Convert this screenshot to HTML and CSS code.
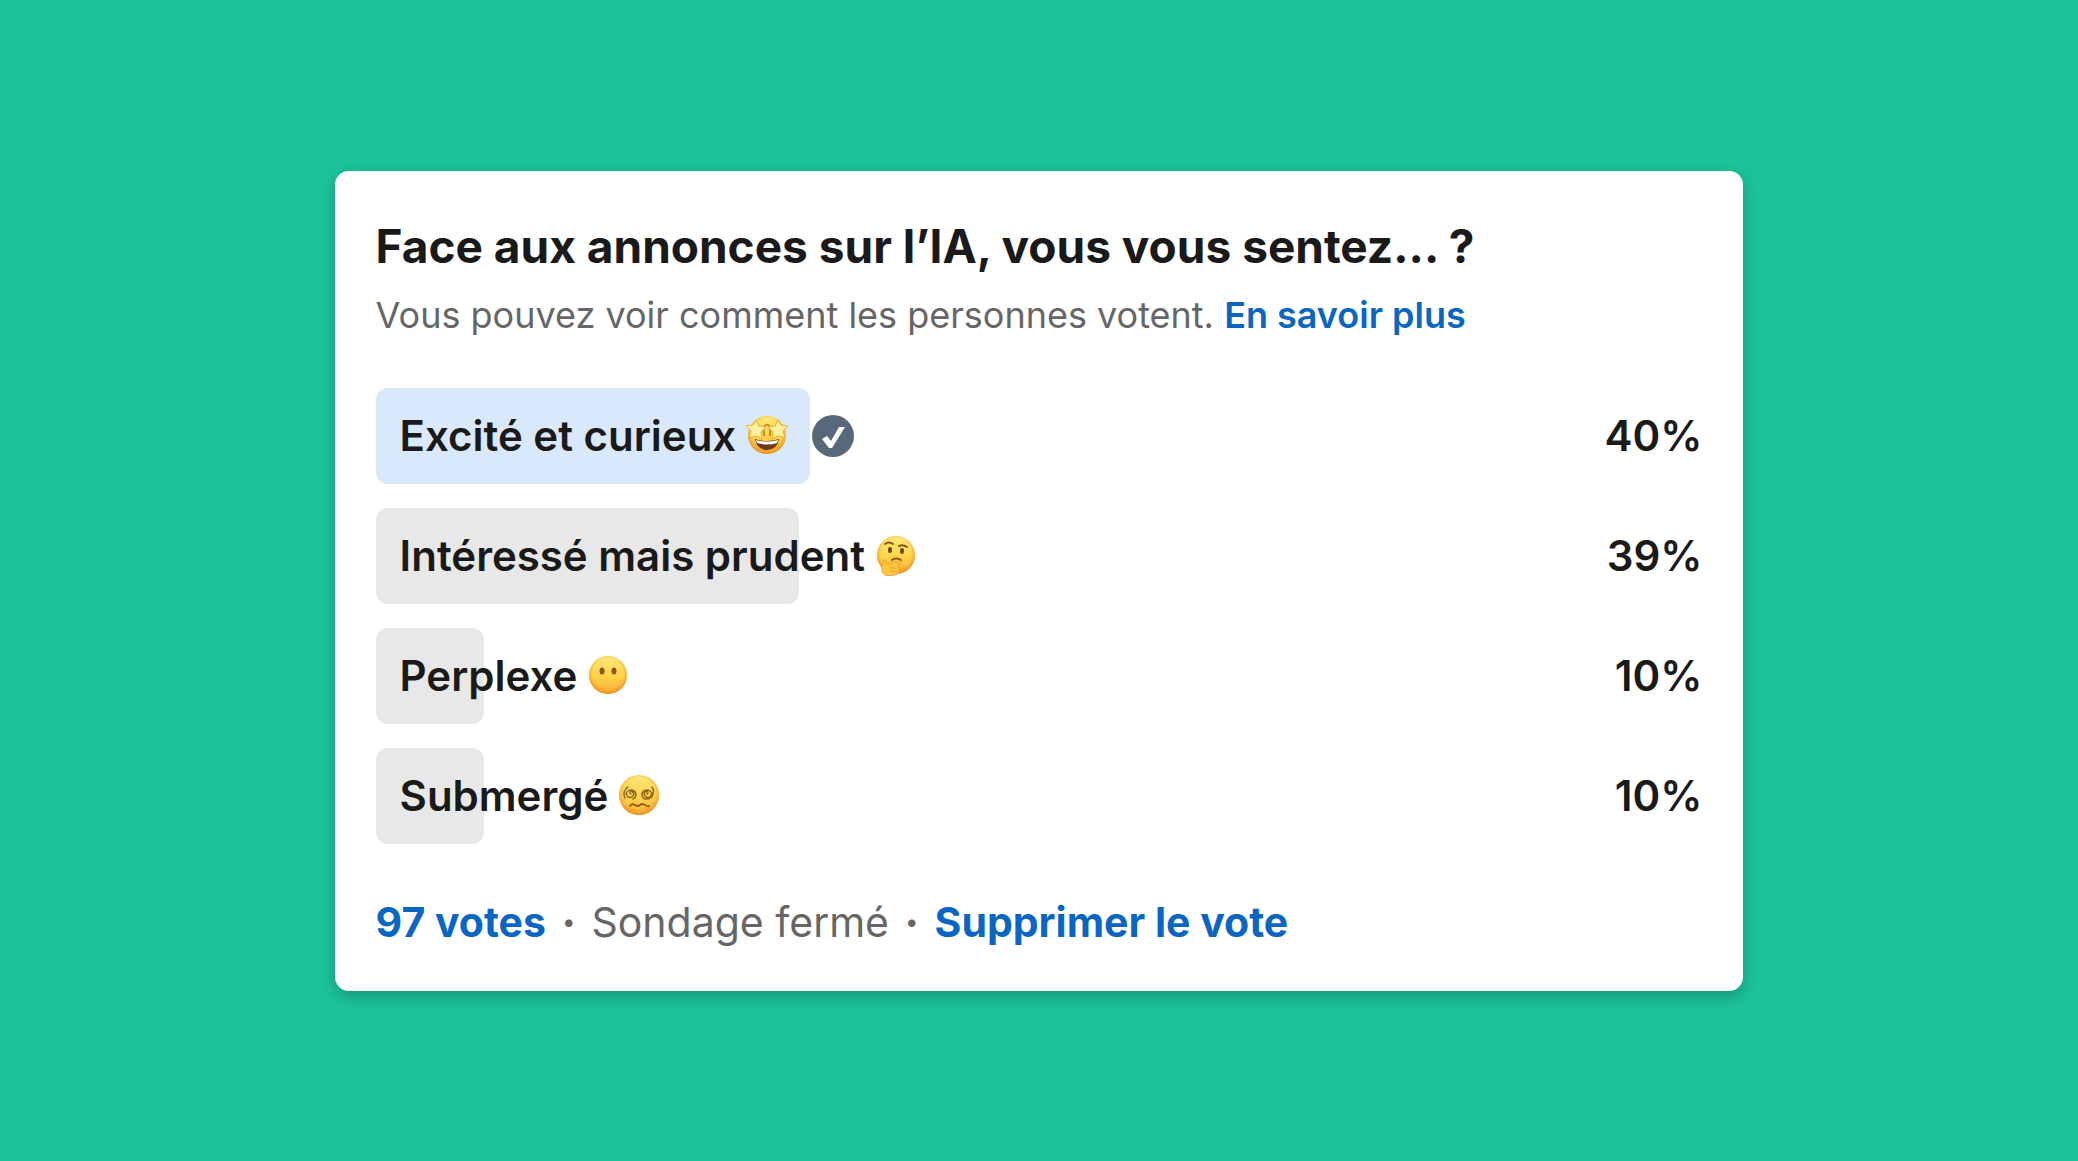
FILE: index.html
```html
<!DOCTYPE html>
<html lang="fr">
<head>
<meta charset="utf-8">
<meta name="viewport" content="width=device-width, initial-scale=1">
<title>Sondage</title>
<link rel="stylesheet" href="styles.css">
</head>
<body>
<svg class="defs" width="0" height="0" aria-hidden="true">
  <defs>
    <linearGradient id="face" x1="0" y1="0" x2="0" y2="1">
      <stop offset="0" stop-color="#ffe878"/>
      <stop offset=".55" stop-color="#fed44b"/>
      <stop offset="1" stop-color="#f9ac36"/>
    </linearGradient>
    <radialGradient id="rim" cx=".5" cy=".45" r=".55">
      <stop offset=".7" stop-color="#f5a02c" stop-opacity="0"/>
      <stop offset="1" stop-color="#e98a1c" stop-opacity=".85"/>
    </radialGradient>
  </defs>
</svg>
<main class="poll">
  <h1 class="poll-title">Face aux annonces sur l’IA, vous vous sentez... ?</h1>
  <p class="poll-note">Vous pouvez voir comment les personnes votent. <a class="link" href="#">En savoir plus</a></p>
  <ul class="options">
    <li class="option">
      <div class="track">
        <div class="bar bar-chosen" style="width:40%"></div>
        <div class="label">
          <span class="label-text">Excité et curieux
          <svg class="emoji" viewBox="0 0 42 42" role="img" aria-label="Yeux en étoiles">
            <circle cx="21" cy="20" r="19" fill="url(#face)"/><circle cx="21" cy="20" r="19" fill="url(#rim)"/>
            <path d="M18 21Q17 9 21 10Q25 9 24 21" fill="none" stroke="#d08d1c" stroke-width="2"/>
            <path d="M10 5l3 6 7 1-5 5 1 7-6-3-7 2 2-7-5-5 7-1zM32 5l-3 6-7 1 5 5-1 7 6-3 7 2-2-7 5-5-7-1z" fill="#fff0a0" stroke="#e9ae39" stroke-width="1"/>
            <path d="M9 24Q21 28 33 24Q31 35 21 35T9 24z" fill="#6c3c13"/>
            <path d="M10 25Q21 28 32 25L31 28Q21 31 11 28z" fill="#fff"/>
          </svg></span>
          <svg class="check" viewBox="0 0 42 42" role="img" aria-label="Votre vote">
            <circle cx="21" cy="21" r="21" fill="#56687a"/>
            <path d="M10 24l5-3 4 5 8-14h6L20 33h-3z" fill="#fff"/>
          </svg>
        </div>
      </div>
      <span class="percent">40%</span>
    </li>
    <li class="option">
      <div class="track">
        <div class="bar" style="width:39%"></div>
        <div class="label">
          <span class="label-text">Intéressé mais prudent
          <svg class="emoji" viewBox="0 0 42 42" role="img" aria-label="Pensif">
            <circle cx="21" cy="20" r="19" fill="url(#face)"/><circle cx="21" cy="20" r="19" fill="url(#rim)"/>
            <ellipse cx="15" cy="15" rx="2" ry="3" fill="#71431a"/><ellipse cx="27" cy="16" rx="2" ry="3" fill="#71431a"/>
            <path d="M10 9Q14 6 18 9M24 11Q28 9 32 12M17 25Q21 22 26 25" fill="none" stroke="#8a5319" stroke-width="2" stroke-linecap="round"/>
            <path d="M9 25Q11 23 12 30Q17 26 24 27Q27 28 23 30Q26 34 22 39Q17 42 10 40Q6 38 7 31z" fill="#ffc840" stroke="#eda22d" stroke-width="1"/>
            <path d="M14 33h8M15 36h7" stroke="#e99b28" stroke-width="1"/>
          </svg></span>
        </div>
      </div>
      <span class="percent">39%</span>
    </li>
    <li class="option">
      <div class="track">
        <div class="bar" style="width:10%"></div>
        <div class="label">
          <span class="label-text">Perplexe
          <svg class="emoji" viewBox="0 0 42 42" role="img" aria-label="Sans bouche">
            <circle cx="21" cy="20" r="19" fill="url(#face)"/><circle cx="21" cy="20" r="19" fill="url(#rim)"/>
            <ellipse cx="15" cy="16" rx="2.500" ry="3.500" fill="#8d5518"/><ellipse cx="27" cy="16" rx="2.500" ry="3.500" fill="#8d5518"/>
          </svg></span>
        </div>
      </div>
      <span class="percent">10%</span>
    </li>
    <li class="option">
      <div class="track">
        <div class="bar" style="width:10%"></div>
        <div class="label">
          <span class="label-text">Submergé
          <svg class="emoji" viewBox="0 0 42 42" role="img" aria-label="Yeux en spirale">
            <circle cx="21" cy="20" r="20" fill="url(#face)"/><circle cx="21" cy="20" r="20" fill="url(#rim)"/>
            <g fill="none" stroke="#94651f" stroke-width="1.500" stroke-linecap="round">
              <path d="M13 19a1.500 1.500 0 1 1 2-2a3.500 3.500 0 1 1-5-1a5 5 0 0 1 8 4a6 6 0 0 1-3 4M7 23a8 8 0 0 1 3-11"/>
              <path d="M29 19a1.500 1.500 0 1 0-2-2a3.500 3.500 0 1 0 5-1a5 5 0 0 0-8 4a6 6 0 0 0 3 4q7 0 8-5a8 8 0 0 0-1-7"/>
              <path d="M12 31q2-3 5-1t5 0t5 0t4 1" stroke-width="2"/>
            </g>
          </svg></span>
        </div>
      </div>
      <span class="percent">10%</span>
    </li>
  </ul>
  <footer class="poll-footer">
    <a class="link" href="#">97 votes</a>
    <span class="dot">•</span>
    <span>Sondage fermé</span>
    <span class="dot">•</span>
    <button class="link" type="button">Supprimer le vote</button>
  </footer>
</main>
</body>
</html>
```
FILE: styles.css
```css
* {
  box-sizing: border-box;
}

body {
  margin: 0;
  min-height: 100vh;
  display: flex;
  align-items: center;
  justify-content: center;
  background: #1cc29a;
  color: #1a1a1a;
  font-family: Inter, "Liberation Sans", sans-serif;
}

.defs {
  position: absolute;
}

.poll {
  width: 67.8%;
  padding: 43px 41px 39px;
  background: #fff;
  border-radius: 14px;
  box-shadow: 0 6px 16px rgba(0, 0, 0, 0.22);
}

.poll-title {
  margin: 0;
  font-size: 46px;
  font-weight: 650;
  line-height: 64px;
}

.poll-note {
  margin: 12px 0 48px;
  color: #666;
  font-size: 36px;
  line-height: 50px;
}

.link {
  padding: 0;
  border: 0;
  background: none;
  color: #0a66c2;
  font: inherit;
  font-weight: 650;
  text-decoration: none;
  cursor: pointer;
}

.poll-note .link {
  font-weight: 600;
}

.options {
  display: grid;
  gap: 24px;
  margin: 0;
  padding: 0;
  list-style: none;
}

.option {
  display: flex;
  align-items: center;
  font-size: 42px;
  font-weight: 600;
  line-height: 96px;
}

.track {
  flex: 1;
  display: grid;
}

.bar,
.label {
  grid-area: 1 / 1;
}

.bar {
  height: 96px;
  border-radius: 12px;
  background: #e8e8e8;
}

.bar-chosen {
  background: #d9e8fb;
}

.label {
  display: flex;
  align-items: center;
  white-space: nowrap;
}

.label-text {
  display: flex;
  align-items: center;
  gap: 10px;
  padding: 0 24px;
}

.emoji,
.check {
  width: 42px;
  height: 42px;
}

.percent {
  width: 240px;
  text-align: right;
}

.poll-footer {
  display: flex;
  align-items: center;
  gap: 16px;
  margin-top: 48px;
  color: #666;
  font-size: 41px;
  line-height: 60px;
}

.dot {
  font-size: 24px;
}
```
